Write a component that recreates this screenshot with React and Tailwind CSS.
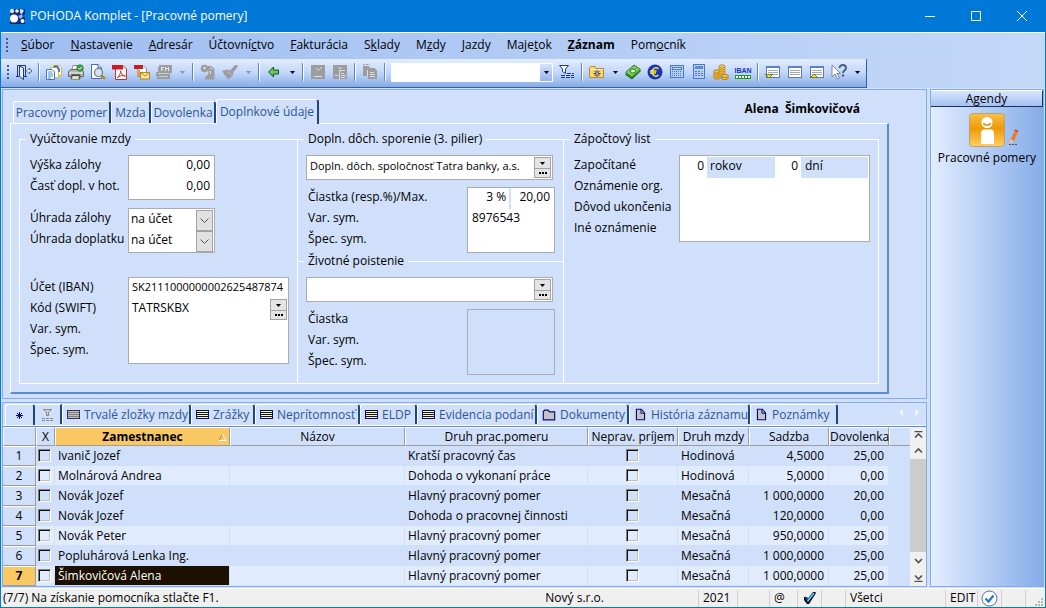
import { useState } from "react";
import clsx from "clsx";

const MENU = [
    ["", "S", "úbor"],
    ["", "N", "astavenie"],
    ["", "A", "dresár"],
    ["Účtovní", "c", "tvo"],
    ["", "F", "akturácia"],
    ["S", "k", "lady"],
    ["M", "z", "dy"],
    ["", "J", "azdy"],
    ["Maje", "t", "ok"],
    ["", "Z", "áznam"],
    ["Pom", "o", "cník"],
];

const FORM_TABS = [
    { name: "Pracovný pomer", width: "w-[98px]" },
    { name: "Mzda", width: "w-[40px]" },
    { name: "Dovolenka", width: "w-[65px]" },
    { name: "Doplnkové údaje", width: "w-[103px]" },
];

const GRID_TABS = [
    { name: "Trvalé zložky mzdy", icon: "gray", width: "w-[129px]" },
    { name: "Zrážky", icon: "yellow", width: "w-[64px]" },
    { name: "Neprítomnosť", icon: "yellow", width: "w-[105px]" },
    { name: "ELDP", icon: "yellow", width: "w-[57px]" },
    { name: "Evidencia podaní", icon: "yellow", width: "w-[120px]" },
    { name: "Dokumenty", icon: "folder", width: "w-[92px]" },
    { name: "História záznamu", icon: "page", width: "w-[121px]" },
    { name: "Poznámky", icon: "page", width: "w-[88px]" },
];

const EMPLOYEES = [
    ["Ivanič Jozef", "Kratší pracovný čas", "Hodinová", "4,5000", "25,00"],
    ["Molnárová Andrea", "Dohoda o vykonaní práce", "Hodinová", "5,0000", "0,00"],
    ["Novák Jozef", "Hlavný pracovný pomer", "Mesačná", "1 000,0000", "20,00"],
    ["Novák Jozef", "Dohoda o pracovnej činnosti", "Mesačná", "120,0000", "0,00"],
    ["Novák Peter", "Hlavný pracovný pomer", "Mesačná", "950,0000", "25,00"],
    ["Popluhárová Lenka Ing.", "Hlavný pracovný pomer", "Mesačná", "1 000,0000", "25,00"],
    ["Šimkovičová Alena", "Hlavný pracovný pomer", "Mesačná", "1 000,0000", "25,00"],
];

// ---------- icons ----------

const Icon = ({ children, size = 16, crisp = true }) => (
    <svg
        width={size}
        height={size}
        viewBox="0 0 16 16"
        fill="none"
        className="shrink-0"
        shapeRendering={crisp ? "crispEdges" : "auto"}
        aria-hidden="true"
    >
        {children}
    </svg>
);

const ExitIcon = () => (
    <Icon crisp={false}>
        <path d="M1.5 12V1.5H9.5V12M0 12.5H3M8 12.5H11" stroke="#1f3a80" />
        <path d="M3.5 2L7.5 4V15.5L3.5 12.5Z" fill="#e8f0ff" stroke="#1f3a80" />
        <path d="M10.5 7L13.5 4V6H15.5V8H13.5V10Z" fill="#fff" stroke="#3b5a97" strokeWidth="0.8" />
    </Icon>
);

const CopyIcon = () => (
    <Icon crisp={false}>
        <path d="M7.5 1.5H13L15.5 4V11.5H7.5Z" fill="#fff" stroke="#e0b030" />
        <path d="M4.5 3.5H10L12.5 6V13.5H4.5Z" fill="#fff" stroke="#d8b848" />
        <path d="M0.5 5.5H6L8.5 8V15.5H0.5Z" fill="#fff" stroke="#4a70c0" />
        <path d="M2 8H6M2 10H7M2 12H7M2 14H5" stroke="#3a8fd0" />
        <path d="M8 2.5H11L13 5V8" stroke="#1f5fc0" strokeWidth="1.5" />
    </Icon>
);

const PrintIcon = () => (
    <Icon crisp={false}>
        <path d="M5 1.5H12V7H3.5Z" fill="#fff" stroke="#888" />
        <path d="M0.5 7.5L2.5 5.5H14L15.5 7.5V12.5H0.5Z" fill="#b5b5b5" stroke="#666" />
        <path d="M1 9H15" stroke="#eee" />
        <path d="M3.5 10.5H12V15H3Z" fill="#444" stroke="#666" />
        <path d="M4.5 12H11L10.5 15H4Z" fill="#d8e6b8" />
        <circle cx="12" cy="4" r="3.3" fill="#3da13d" stroke="#1e7a1e" strokeWidth="0.6" />
        <path d="M10.4 4L11.6 5.3L13.8 2.8" stroke="#fff" />
    </Icon>
);

const PreviewIcon = () => (
    <Icon crisp={false}>
        <path d="M1.5 0.5H8L11.5 4V14.5H1.5Z" fill="#fff" stroke="#4a6cae" />
        <path d="M8 0.5V4H11.5" fill="#c8d8f4" stroke="#4a6cae" />
        <circle cx="8.5" cy="8.5" r="4" fill="#cfe4fa" stroke="#777" strokeWidth="1.2" />
        <path d="M11.5 11.5L15 15" stroke="#b8860b" strokeWidth="2.4" />
    </Icon>
);

const PdfIcon = () => (
    <Icon crisp={false}>
        <path d="M3.5 1.5H11L14.5 5V15.5H3.5Z" fill="#fff" stroke="#c03030" />
        <rect x="0" y="1" width="11" height="4.5" fill="#c81e1e" />
        <path d="M5 14C7 12 9 9 8.6 6.8C8.4 9 10.5 12 13.5 12C10 11 7 12 5 14Z" stroke="#d03030" />
    </Icon>
);

const PdfMailIcon = () => (
    <Icon crisp={false}>
        <path d="M3.5 1.5H9L12.5 5V12.5H3.5Z" fill="#fff" stroke="#8090b0" />
        <rect x="0" y="1" width="9" height="4" fill="#c81e1e" />
        <rect x="3" y="6" width="3" height="6" fill="#d8a050" />
        <rect x="6.5" y="8.5" width="9" height="6.5" fill="#fbe49a" stroke="#b58a1c" />
        <path d="M6.5 8.5L11 12L15.5 8.5" stroke="#b58a1c" />
    </Icon>
);

const FmIcon = () => (
    <Icon>
        <path d="M3 1H16V9H14V15H1V12H0V8H2V3H3Z" fill="#9d9d9d" />
        <path d="M5.5 7V3.5H8M6 5.5H7M9.5 7V3M10 4.5H12M12.5 7V3" stroke="#dce6f6" />
        <path d="M2 9.5H13M3 12.5H12" stroke="#c6cfdd" />
    </Icon>
);

const KeysIcon = () => (
    <Icon crisp={false}>
        <path d="M8 2H11L14.5 5V15.5H5V13.5L8.5 10Z" fill="#9d9d9d" />
        <circle cx="4.5" cy="4.5" r="3.8" fill="#9d9d9d" />
        <circle cx="4.5" cy="4" r="1.2" fill="#dce6f6" />
        <path d="M10 3.5L12.5 5.5M10.5 7V10" stroke="#dce6f6" />
    </Icon>
);

const BrushIcon = () => (
    <Icon crisp={false}>
        <path d="M0 7L5 5.5L8 6.5L13 1H15.5V3L11.5 8L11 11L6.5 15.5L3 11.5Z" fill="#9d9d9d" />
        <path d="M5 8L10 10.5" stroke="#c6cfdd" strokeWidth="0.6" />
    </Icon>
);

const BackIcon = () => (
    <Icon crisp={false}>
        <path d="M2.5 8L7.5 3V6H12.5V10H7.5V13Z" fill="#6cc36c" stroke="#0d5a0d" />
    </Icon>
);

const SaveIcon = () => (
    <Icon>
        <path d="M1 1H15V15H1Z" fill="#9d9d9d" />
        <path d="M6 4.5H7M7 5.5H8M8 6.5H9M9 5.5H10M10 4.5H11M11 3.5H12M4 12.5H12" stroke="#d5deec" />
    </Icon>
);

const SaveCopyIcon = () => (
    <Icon>
        <path d="M1 1H15V15H1Z" fill="#9d9d9d" />
        <path d="M6 3.5H7M7 4.5H9M9 3.5H10M3 11.5H6" stroke="#d5deec" />
        <path d="M7.5 15V6.5H13M9 9.5H12M9 11.5H14M9 13.5H13" stroke="#d5deec" />
    </Icon>
);

const PasteIcon = () => (
    <Icon>
        <path d="M1 2H6L8 4V12H1ZM6 4H12L15 7V15H6Z" fill="#9d9d9d" />
        <path d="M5.5 6V12M8 8.5H12M8 10.5H13M8 12.5H13" stroke="#d5deec" />
        <path d="M1 0.5H8" stroke="#9d9d9d" strokeDasharray="2 1" />
    </Icon>
);

const FilterIcon = () => (
    <Icon crisp={false}>
        <path d="M0.5 1.5H9.5L6.5 5V9.5L3.5 7.5V5Z" fill="#fff" stroke="#1f3a80" />
        <path d="M2 11.5H15M2 13.5H15M8 9.5H15" stroke="#1f3a80" strokeDasharray="4 1" />
    </Icon>
);

const GridFilterIcon = () => (
    <svg width="13" height="14" viewBox="0 0 13 14" fill="none" shapeRendering="crispEdges" aria-hidden="true">
        <path d="M2 1H11V2H10V3H9V4H8V8H5V4H4V3H3V2H2Z" fill="#8a8a8a" />
        <path d="M4 2H9V3H8V4H7V7H6V4H5V3H4Z" fill="#d0d0d0" />
        <path d="M1 10.5H12M1 12.5H12" stroke="#8a8a8a" strokeDasharray="3 1" />
    </svg>
);

const StarFolderIcon = () => (
    <Icon crisp={false}>
        <path d="M0.5 3.5V13.5H14.5V4.5H7L6 2.5H1.5Z" fill="#fbd768" stroke="#b8892a" />
        <path d="M1 5.5H14" stroke="#fff1b8" />
        <path d="M8 6V13M4.5 9.5H11.5M5.5 7L10.5 12M10.5 7L5.5 12" stroke="#26357a" />
        <circle cx="8" cy="9.5" r="1" fill="#fbd768" />
    </Icon>
);

const MoneyIcon = () => (
    <Icon crisp={false}>
        <path d="M0.5 10.5L9 3L15.5 7L7 15Z" fill="#2e8b2e" stroke="#1f6a1f" />
        <path d="M0.5 8.5L9 1L15.5 5.5L7 13Z" fill="#7cc95a" stroke="#2b7f2b" />
        <ellipse cx="8" cy="7" rx="2.6" ry="2" fill="#e8f6d0" stroke="#2b7f2b" />
    </Icon>
);

const EuroIcon = () => (
    <Icon crisp={false}>
        <circle cx="8" cy="8" r="7.5" fill="#1a35b0" />
        <path d="M11.5 4.8A4 4 0 1 0 11.5 11.2M3 7H9.5M3 9H9" stroke="#ffe24a" strokeWidth="1.5" />
    </Icon>
);

const WideCalcIcon = () => (
    <Icon>
        <rect x="1.5" y="1.5" width="13" height="12" fill="#b6d0f7" stroke="#4a78c0" />
        <rect x="3.5" y="3.5" width="9" height="2" fill="#dbe8fc" stroke="#4a78c0" />
        <path d="M3 7.5H13M3 9.5H13M3 11.5H13" stroke="#4a78c0" strokeDasharray="1 1" />
    </Icon>
);

const CalcIcon = () => (
    <Icon>
        <rect x="2.5" y="0.5" width="11" height="14" fill="#b8d2f6" stroke="#4a78c0" />
        <rect x="4" y="2" width="8" height="3" fill="#5b8bd0" />
        <path d="M4 7.5H12M4 9.5H12M4 11.5H12" stroke="#4a78c0" strokeDasharray="2 1" />
        <path d="M10 7.5H12" stroke="#e0a020" />
    </Icon>
);

const CoinsIcon = () => (
    <Icon crisp={false}>
        {[13.5, 11.5, 9.5, 7.5].map((y) => (
            <ellipse key={y} cx="4" cy={y} rx="3.4" ry="1.6" fill="#f5c435" stroke="#a86f10" strokeWidth="0.8" />
        ))}
        {[8.5, 6.5, 4.5, 2.5].map((y) => (
            <ellipse key={y} cx="9" cy={y} rx="3.2" ry="1.6" fill="#fbd04c" stroke="#a86f10" strokeWidth="0.8" />
        ))}
        {[14, 12].map((y) => (
            <ellipse key={y} cx="11.8" cy={y} rx="3.6" ry="1.6" fill="#f5c435" stroke="#a86f10" strokeWidth="0.8" />
        ))}
    </Icon>
);

const ListIcon = ({ mark }) => (
    <Icon>
        <rect x="1.5" y="2.5" width="13" height="11" fill="#fff" stroke="#5b7bb0" />
        <rect x="1" y="2" width="14" height="2" fill="#5b84c4" />
        <path d="M3 6.5H13M3 8.5H13M3 10.5H13" stroke="#a0a8b8" />
        {mark === "down" && <path d="M0.5 10.5H7.5L4 14Z" fill="#f3ee3a" stroke="#77771a" />}
        {mark === "up" && <path d="M1.5 13.5H8.5L5 10Z" fill="#f3ee3a" stroke="#77771a" />}
    </Icon>
);

const HelpIcon = () => (
    <Icon crisp={false}>
        <path d="M1 1V13L4 10L6.5 15L8.5 14L6 9.5H9.5Z" fill="#fff" stroke="#6f7f98" strokeWidth="0.9" />
        <path d="M8.5 4C8.5 0 15 0 15 4C15 6.5 12 6.5 12 9" stroke="#3f5f80" strokeWidth="1.8" />
        <circle cx="12" cy="11.5" r="1.2" fill="#3f5f80" />
    </Icon>
);

const CaretIcon = ({ color = "#000" }) => (
    <svg width="5" height="3" viewBox="0 0 5 3" aria-hidden="true">
        <path d="M0 0H5L2.5 3Z" fill={color} />
    </svg>
);

const TabIcon = ({ kind }) => {
    if (kind === "folder")
        return (
            <Icon size={14} crisp={false}>
                <path d="M1.5 13.5V4L3 2.5H7L8.5 4.5H14.5V13.5Z" fill="#c4c4c4" stroke="#0a0a70" strokeWidth="1.3" />
            </Icon>
        );
    if (kind === "page")
        return (
            <Icon size={13} crisp={false}>
                <path d="M3 1.5H9L13 6V14.5H3Z" fill="#c4c4c4" stroke="#0a0a70" strokeWidth="1.4" />
                <path d="M8.5 1.5V6.5H13" stroke="#0a0a70" strokeWidth="1.2" />
            </Icon>
        );
    // filled bars instead of strokes keep the light stripes visible at this size
    return (
        <svg width="13" height="10" viewBox="0 0 13 10" shapeRendering="crispEdges" className="shrink-0" aria-hidden="true">
            <rect width="13" height="9" fill={kind === "gray" ? "#303050" : "#0a0a70"} />
            {kind === "gray" && <rect x="1" y="1" width="11" height="7" fill="#808080" />}
            <path d="M1 1H12V2H1ZM1 3H12V4H1ZM1 5H12V6H1ZM1 7H12V8H1Z" fill={kind === "gray" ? "#c0c0c0" : "#ffff80"} />
        </svg>
    );
};

// ---------- toolbar ----------

const Tool = ({ label, children, disabled }) => (
    <button type="button" aria-label={label} disabled={disabled} className="flex h-full w-[22px] items-center justify-center">
        {children}
    </button>
);

const ToolCaret = ({ label, color }) => (
    <button type="button" aria-label={label} className="flex h-full w-[14px] items-center justify-center">
        <CaretIcon color={color} />
    </button>
);

const Sep = () => <div className="mx-[3px] h-[18px] w-0.5 border-l border-[#5f86c4] bg-white" />;

const Grip = () => (
    <div className="flex flex-col gap-0.5" aria-hidden="true">
        {[0, 1, 2, 3].map((i) => (
            <span key={i} className="size-0.5 bg-[#3b5a97]" />
        ))}
    </div>
);

const Toolbar = () => (
    <div className="flex h-[29px] items-center self-start border-r border-b border-[#3b5a97] bg-linear-to-b from-[#e3edff] via-[#c0d6f9] to-[#86ace8] pr-[2px] pb-0.5 pl-[6px]">
        <Grip />
        <div className="ml-1 flex h-full items-center">
            <Tool label="Koniec"><ExitIcon /></Tool>
            <Sep />
            <Tool label="Kopírovať"><CopyIcon /></Tool>
            <Tool label="Tlač"><PrintIcon /></Tool>
            <Tool label="Náhľad"><PreviewIcon /></Tool>
            <Tool label="PDF"><PdfIcon /></Tool>
            <Tool label="PDF e-mailom"><PdfMailIcon /></Tool>
            <Tool label="Fax" disabled><FmIcon /></Tool>
            <ToolCaret label="Možnosti faxu" color="#8a94a6" />
            <Sep />
            <Tool label="Kľúče" disabled><KeysIcon /></Tool>
            <Tool label="Formát" disabled><BrushIcon /></Tool>
            <ToolCaret label="Možnosti formátu" color="#8a94a6" />
            <Sep />
            <Tool label="Späť"><BackIcon /></Tool>
            <ToolCaret label="História" />
            <Sep />
            <Tool label="Uložiť" disabled><SaveIcon /></Tool>
            <Tool label="Uložiť kópiu" disabled><SaveCopyIcon /></Tool>
            <Sep />
            <Tool label="Prilepiť" disabled><PasteIcon /></Tool>
            <Sep />
            <div className="ml-0.5 flex h-[19px] w-[162px] border border-white bg-white">
                <input aria-label="Hľadať" className="min-w-0 flex-1 bg-white px-1 outline-none" />
                <button type="button" aria-label="Zoznam" className="flex w-3 items-center justify-center bg-linear-to-b from-[#d6e5fd] to-[#93b5ec]">
                    <CaretIcon />
                </button>
            </div>
            <div className="ml-[3px] flex h-full items-center">
                <Tool label="Filter"><FilterIcon /></Tool>
                <Sep />
                <Tool label="Obľúbené"><StarFolderIcon /></Tool>
                <ToolCaret label="Zoznam obľúbených" />
                <Tool label="Peniaze"><MoneyIcon /></Tool>
                <Tool label="Euro"><EuroIcon /></Tool>
                <Tool label="Kalkulačka"><WideCalcIcon /></Tool>
                <Tool label="Výpočet"><CalcIcon /></Tool>
                <Tool label="Mince"><CoinsIcon /></Tool>
                <button type="button" className="flex h-full w-[22px] flex-col items-center justify-center">
                    <span className="font-['Liberation_Sans',sans-serif] text-[7px] leading-[9px] font-bold text-[#1a35b0]">IBAN</span>
                    <svg width="16" height="4" viewBox="0 0 16 4" shapeRendering="crispEdges" aria-hidden="true">
                        <path d="M0 0H16V4H0Z" fill="#1c9c1c" />
                        <path d="M1 2H15" stroke="#fff" strokeWidth="2" strokeDasharray="2 1" />
                    </svg>
                </button>
                <Sep />
                <Tool label="Dole"><ListIcon mark="down" /></Tool>
                <Tool label="Zoznam agendy"><ListIcon /></Tool>
                <Tool label="Hore"><ListIcon mark="up" /></Tool>
                <Tool label="Pomoc"><HelpIcon /></Tool>
                <ToolCaret label="Možnosti pomoci" />
            </div>
        </div>
    </div>
);

// ---------- form ----------

const Labels = ({ items }) => (
    <div className="flex flex-col">
        {items.map(([id, text]) => (
            <label key={id} htmlFor={id} className="h-[21px] leading-[20px] whitespace-nowrap">
                {text}
            </label>
        ))}
    </div>
);

const Box = ({ className, disabled, children }) => (
    <div className={clsx("flex flex-col border border-[#a9adb3]", !disabled && "bg-white", className)}>{children}</div>
);

const Field = ({ id, value = "", className, ...rest }) => (
    <input id={id} defaultValue={value} className={clsx("h-[21px] w-full min-w-0 pb-1 outline-none", className)} {...rest} />
);

const PickButtons = ({ label }) => (
    <div className="flex w-[17px] shrink-0 flex-col">
        <button type="button" aria-label={label} className="flex h-[12px] items-center justify-center border border-[#a3a3a3] bg-[#e4e4e4]">
            <CaretIcon />
        </button>
        <button type="button" aria-label={label + " – viac"} className="flex h-[9px] items-center justify-center gap-px border border-t-0 border-[#a3a3a3] bg-[#e4e4e4]">
            <span className="size-0.5 bg-black" />
            <span className="size-0.5 bg-black" />
            <span className="size-0.5 bg-black" />
        </button>
    </div>
);

const PayoutSelect = ({ id }) => (
    <div className="relative flex">
        <select id={id} defaultValue="na účet" className="h-[21px] w-full appearance-none pb-1 pl-px outline-none">
            <option>na účet</option>
            <option>v hotovosti</option>
        </select>
        <span className="pointer-events-none absolute inset-y-0 right-0 flex w-[17px] items-center justify-center border border-[#a3a3a3] bg-[#e1e1e1]">
            <svg width="9" height="5" viewBox="0 0 9 5" fill="none" aria-hidden="true">
                <path d="M0.5 0.5L4.5 4.5L8.5 0.5" stroke="#505050" />
            </svg>
        </span>
    </div>
);

const Legend = ({ children, className }) => <legend className={clsx("h-4 px-1 leading-4", className)}>{children}</legend>;

const PayoutFieldset = () => (
    <fieldset className="border border-white pt-2 pl-[10px]">
        <Legend className="-ml-1">Vyúčtovanie mzdy</Legend>
        <div className="grid grid-cols-[98px_1fr] items-start gap-y-2">
            <Labels items={[["zaloha", "Výška zálohy"], ["hotovost", "Časť dopl. v hot."]]} />
            <Box className="h-[45px] w-[87px]">
                <Field id="zaloha" value="0,00" className="pr-1 text-right" />
                <Field id="hotovost" value="0,00" className="pr-1 text-right" />
            </Box>
            <Labels items={[["uhradaZalohy", "Úhrada zálohy"], ["uhradaDoplatku", "Úhrada doplatku"]]} />
            <Box className="h-[45px] w-[87px] p-px">
                <PayoutSelect id="uhradaZalohy" />
                <PayoutSelect id="uhradaDoplatku" />
            </Box>
        </div>
        <div className="mt-6 grid grid-cols-[98px_1fr] items-start">
            <Labels
                items={[["iban", "Účet (IBAN)"], ["swift", "Kód (SWIFT)"], ["varSym", "Var. sym."], ["specSym", "Špec. sym."]]}
            />
            <Box className="h-[87px] w-[161px]">
                <Field id="iban" value="SK2111000000002625487874" className="pl-[3px] text-[11px]" />
                <div className="flex items-center pr-px">
                    <Field id="swift" value="TATRSKBX" className="pl-[3px]" />
                    <PickButtons label="Vybrať banku" />
                </div>
                <Field id="varSym" className="pl-[3px]" />
                <Field id="specSym" className="pl-[3px]" />
            </Box>
        </div>
    </fieldset>
);

const SavingsFieldset = () => (
    <fieldset className="border-t border-white pt-2 pr-2 pl-2">
        <Legend className="-ml-0.5">Dopln. dôch. sporenie (3. pilier)</Legend>
        <Box className="mr-[2px] h-[25px]">
            <div className="flex items-center py-px pr-px">
                <Field aria-label="Spoločnosť" value="Dopln. dôch. spoločnosť Tatra banky, a.s." className="pl-[3px] text-[11px]" />
                <PickButtons label="Vybrať spoločnosť" />
            </div>
        </Box>
        <div className="mt-[7px] flex items-start justify-between pl-[2px]">
            <Labels items={[["sporenie", "Čiastka (resp.%)/Max."], ["sporVar", "Var. sym."], ["sporSpec", "Špec. sym."]]} />
            <Box className="h-[66px] w-[88px]">
                <div className="flex">
                    <Field id="sporenie" value="3 %" className="border-r-2 border-[#d0e0fa] pr-[3px] text-right" />
                    <Field aria-label="Max." value="20,00" className="pr-1 text-right" />
                </div>
                <Field id="sporVar" value="8976543" className="pl-1" />
                <Field id="sporSpec" className="pl-1" />
            </Box>
        </div>
    </fieldset>
);

const InsuranceFieldset = () => (
    <fieldset className="grow border-y border-white pt-2 pr-2 pb-2 pl-2">
        <Legend className="-ml-0.5">Životné poistenie</Legend>
        <Box className="mr-[2px] h-[25px]">
            <div className="flex items-center py-px pr-px">
                <Field aria-label="Poisťovňa" className="pl-[3px]" />
                <PickButtons label="Vybrať poisťovňu" />
            </div>
        </Box>
        <div className="mt-[7px] flex items-start justify-between pl-[2px]">
            <Labels items={[["poistenie", "Čiastka"], ["poistVar", "Var. sym."], ["poistSpec", "Špec. sym."]]} />
            <Box disabled className="h-[66px] w-[88px]">
                <Field id="poistenie" disabled />
                <Field id="poistVar" disabled />
                <Field id="poistSpec" disabled />
            </Box>
        </div>
    </fieldset>
);

const CreditFieldset = () => (
    <fieldset className="border border-white pt-2 pl-[10px]">
        <Legend className="-ml-1">Zápočtový list</Legend>
        <div className="grid grid-cols-[105px_191px] items-start">
            <Labels
                items={[["roky", "Započítané"], ["oznamenie", "Oznámenie org."], ["dovod", "Dôvod ukončenia"], ["ine", "Iné oznámenie"]]}
            />
            <Box className="h-[87px] p-px">
                <div className="flex bg-[#d0e0fa]">
                    <span className="flex w-[26px] shrink-0 bg-white"><Field id="roky" value="0" className="pr-[3px] text-right" /></span>
                    <label htmlFor="roky" className="w-[68px] shrink-0 pl-[3px] leading-[17px]">rokov</label>
                    <span className="flex w-[26px] shrink-0 bg-white"><Field id="dni" value="0" className="pr-[3px] text-right" /></span>
                    <label htmlFor="dni" className="pl-1 leading-[17px]">dní</label>
                </div>
                <Field id="oznamenie" className="px-1" />
                <Field id="dovod" className="px-1" />
                <Field id="ine" className="px-1" />
            </Box>
        </div>
    </fieldset>
);

const FormPanel = () => {
    const [active, setActive] = useState("Doplnkové údaje");

    return (
        <section className="border border-[#86ace8] pt-[9px] pr-[37px] pb-1 pl-[7px]">
            <div className="flex items-end pl-[3px]">
                {FORM_TABS.map((tab) => (
                    <button
                        key={tab.name}
                        type="button"
                        onClick={() => setActive(tab.name)}
                        className={clsx(
                            "flex items-center justify-center rounded-t-[3px] border border-r-2 border-b-0 border-white border-r-[#1f4788] whitespace-nowrap text-[#2f5597]",
                            tab.width,
                            tab.name === active ? "relative -mb-px h-[25px] bg-[#d0e0fa] pb-px" : "h-[22px]",
                        )}
                    >
                        {tab.name}
                    </button>
                ))}
                <h1 className="mr-[29px] mb-1.5 ml-auto font-bold whitespace-pre">Alena  Šimkovičová</h1>
            </div>
            <div className="grid grid-cols-[279px_265px_1fr] border-t border-r-2 border-b-2 border-l border-white border-r-[#5b8bd5] border-b-[#5b8bd5] px-2 pt-[7px] pb-2">
                <PayoutFieldset />
                <div className="flex flex-col">
                    <SavingsFieldset />
                    <InsuranceFieldset />
                </div>
                <CreditFieldset />
            </div>
        </section>
    );
};

// ---------- employee grid ----------

const Check = ({ label }) => (
    <input
        type="checkbox"
        aria-label={label}
        className="block size-[13px] appearance-none border border-t-[#808080] border-r-white border-b-white border-l-[#808080] shadow-[inset_1px_1px_0_#101010,inset_-1px_-1px_0_#c0c0c0]"
    />
);

const Th = ({ children, className }) => (
    <th className={clsx("h-[19px] border-t border-r border-b border-l border-t-white border-r-[#9c9c9c] border-b-[#9c9c9c] border-l-white p-0 font-normal whitespace-nowrap", className)}>
        {children}
    </th>
);

const GridTabs = () => (
    <div className="flex h-[23px] shrink-0 items-stretch border-b border-white pt-px pl-0.5 text-[#2f5597]">
        <button type="button" aria-label="Tabuľka" className="flex w-[30px] items-center justify-center rounded-t-[3px] border-t border-r-2 border-l border-white border-r-[#1f4788]">
            <svg width="7" height="7" viewBox="0 0 7 7" fill="none" aria-hidden="true">
                <path d="M3.5 0V7M0 3.5H7M1 1L6 6M6 1L1 6" stroke="#0a0a80" />
            </svg>
        </button>
        <button type="button" aria-label="Filter tabuľky" className="mb-px flex w-[27px] items-center justify-center border-t border-r-2 border-white border-r-[#1f4788]">
            <GridFilterIcon />
        </button>
        {GRID_TABS.map((tab) => (
            <button
                key={tab.name}
                type="button"
                className={clsx(
                    "mb-px flex items-center gap-1 rounded-t-[3px] border-t border-r-2 border-l border-white border-r-[#1f4788] pl-1 whitespace-nowrap",
                    tab.width,
                )}
            >
                <TabIcon kind={tab.icon} />
                {tab.name}
            </button>
        ))}
        <div className="mr-[7px] mb-1 ml-auto flex items-center gap-3">
            <svg width="4" height="7" viewBox="0 0 4 7" aria-hidden="true"><path d="M4 0V7L0 3.5Z" fill="#f2f6fc" /></svg>
            <svg width="4" height="7" viewBox="0 0 4 7" aria-hidden="true"><path d="M0 0V7L4 3.5Z" fill="#f2f6fc" /></svg>
        </div>
    </div>
);

const ScrollBar = () => (
    <div className="flex w-4 shrink-0 flex-col items-center bg-[#f0f0f0] text-[#505050]">
        {["M0.5 0.5H8.5M1 6.5L4.5 3L8 6.5", "M1 5.5L4.5 2L8 5.5"].map((d) => (
            <button key={d} type="button" aria-label="Hore" className="flex h-[16px] items-center">
                <svg width="9" height="8" viewBox="0 0 9 8" fill="none"><path d={d} stroke="currentColor" strokeWidth="1.6" /></svg>
            </button>
        ))}
        <div className="w-full flex-1 bg-[#cdcdcd]" />
        {["M1 2L4.5 5.5L8 2", "M0.5 7.5H8.5M1 1.5L4.5 5L8 1.5"].map((d) => (
            <button key={d} type="button" aria-label="Dole" className="flex h-[17px] items-center">
                <svg width="9" height="8" viewBox="0 0 9 8" fill="none"><path d={d} stroke="currentColor" strokeWidth="1.6" /></svg>
            </button>
        ))}
    </div>
);

const EmployeeGrid = () => (
    <section className="mt-[3px] flex flex-1 flex-col border border-[#86ace8]">
        <GridTabs />
        <div className="flex flex-1 border-t border-[#5b8bd5]">
            <div className="min-w-0 flex-1">
                <table className="w-full table-fixed border-separate border-spacing-0">
                    <colgroup>
                        <col className="w-[33px]" />
                        <col className="w-[19px]" />
                        <col className="w-[175px]" />
                        <col className="w-[175px]" />
                        <col className="w-[183px]" />
                        <col className="w-[90px]" />
                        <col className="w-[71px]" />
                        <col className="w-[80px]" />
                        <col className="w-[60px]" />
                        <col />
                    </colgroup>
                    <thead>
                        <tr>
                            <Th />
                            <Th>X</Th>
                            <Th className="bg-[#fac863] text-center">
                                <span className="grid grid-cols-[1fr_auto_1fr] items-center font-bold">
                                    <span />
                                    Zamestnanec
                                    <svg width="9" height="8" viewBox="0 0 9 8" fill="none" className="mr-[2px] justify-self-end" aria-hidden="true">
                                        <path d="M4.5 1L1 7.5" stroke="#a09070" />
                                        <path d="M4.5 1L8 7.5H1" stroke="#fff" />
                                    </svg>
                                </span>
                            </Th>
                            <Th>Názov</Th>
                            <Th>Druh prac.pomeru</Th>
                            <Th>Neprav. príjem</Th>
                            <Th>Druh mzdy</Th>
                            <Th>Sadzba</Th>
                            <Th>Dovolenka</Th>
                            <Th className="border-r-0" />
                        </tr>
                    </thead>
                    <tbody>
                        {EMPLOYEES.map(([name, contract, wage, rate, leave], i) => {
                            const selected = i === EMPLOYEES.length - 1;
                            const base = "h-[20px] border-r border-b border-[#d0e0fa] p-0 whitespace-nowrap";
                            const cell = clsx(base, [1, 4, 6].includes(i) && "bg-[#e0ebfe]");
                            return (
                                <tr key={i}>
                                    <th
                                        scope="row"
                                        className={clsx(
                                            "h-[20px] border-t border-r border-b border-t-white border-r-[#9c9c9c] border-b-[#9c9c9c] p-0",
                                            selected ? "bg-[#fac863] font-bold" : "font-normal",
                                        )}
                                    >
                                        {i + 1}
                                    </th>
                                    <td className={clsx(cell, "pl-[2px]")}><Check label={"Vybrať " + name} /></td>
                                    <td className={clsx(selected ? base + " bg-[#1c1000] text-white" : cell, "pl-[3px]")}>{name}</td>
                                    <td className={cell} />
                                    <td className={clsx(cell, "pl-[3px]")}>{contract}</td>
                                    <td className={cell}><div className="flex justify-center"><Check label="Nepravidelný príjem" /></div></td>
                                    <td className={clsx(cell, "pl-[3px]")}>{wage}</td>
                                    <td className={clsx(cell, "pr-1 text-right")}>{rate}</td>
                                    <td className={clsx(cell, "pr-1 text-right")}>{leave}</td>
                                    <td className="p-0" />
                                </tr>
                            );
                        })}
                    </tbody>
                </table>
            </div>
            <ScrollBar />
        </div>
    </section>
);

const Sidebar = () => (
    <aside className="ml-[3px] flex w-[114px] shrink-0 flex-col items-center border border-[#86ace8] bg-linear-to-r from-[#e3edff] to-[#86ace8]">
        <h2 className="h-[17px] w-full border-t border-r border-b border-t-white border-r-[#1f3060] border-b-[#1f3060] bg-linear-to-b from-[#d8e6fd] to-[#a3c1f1] text-center leading-[16px]">
            Agendy
        </h2>
        <a href="#pomery" className="mt-1.5 flex flex-col items-center whitespace-nowrap">
            <svg width="50" height="36" viewBox="0 0 50 36" fill="none" className="ml-[14px]" aria-hidden="true">
                <defs>
                    <linearGradient id="tile" x1="0" y1="0" x2="0" y2="1">
                        <stop offset="0" stopColor="#f8c04a" />
                        <stop offset="0.45" stopColor="#ee9a08" />
                        <stop offset="1" stopColor="#fdd060" />
                    </linearGradient>
                </defs>
                <rect x="0.5" y="0.5" width="35" height="33" rx="3" fill="url(#tile)" stroke="#b5a27c" />
                <circle cx="18" cy="9.5" r="5.5" fill="#fff" />
                <path d="M14.5 10C15.5 13 20.5 13 21.5 10" stroke="#e08c08" strokeWidth="1.5" />
                <path d="M12 18.5L14 16.5H23L25 18.5V31H12Z" fill="#fff" />
                <path d="M41 31L42 26L46 17L49 18.5L45 28Z" fill="#f07a28" />
                <path d="M41 31L42 26.5L44.5 28Z" fill="#f6dcb0" />
                <path d="M46 17L49 18.5" stroke="#c84020" strokeWidth="1.5" />
                <path d="M40 31.5H49" stroke="#405070" strokeDasharray="2 1" />
            </svg>
            <span className="mt-px">Pracovné pomery</span>
        </a>
    </aside>
);

const StatusCell = ({ className, children }) => (
    <div className={clsx("flex h-[17px] shrink-0 items-center border-l border-[#d0d0d0]", className)}>{children}</div>
);

const StatusBar = () => (
    <footer className="mt-px flex h-[19px] items-center border-t border-white bg-[#f0f0f0]">
        <span className="pl-[2px]">(7/7) Na získanie pomocníka stlačte F1.</span>
        <span className="mr-[94px] ml-auto">Nový s.r.o.</span>
        <StatusCell className="w-[39px] pl-1">2021</StatusCell>
        <StatusCell className="w-[32px]" />
        <StatusCell className="w-[28px] pl-1">@</StatusCell>
        <StatusCell className="w-[24px] justify-center">
            <svg width="14" height="14" viewBox="0 0 14 14" aria-hidden="true">
                <path d="M1 6H4L5 8L10 1H12L13 2L6 13H4L1 9Z" fill="#000" />
                <path d="M2 6L4.5 9.5L10 2" fill="none" stroke="#1a35e0" strokeWidth="1.4" />
                <path d="M4.5 10.5L11 2" stroke="#4fd8e8" strokeWidth="1.6" />
            </svg>
        </StatusCell>
        <StatusCell className="w-[24px]" />
        <StatusCell className="w-[100px] pl-1">Všetci</StatusCell>
        <StatusCell className="w-[32px] pl-1">EDIT</StatusCell>
        <StatusCell className="w-[24px] justify-center">
            <svg width="17" height="17" viewBox="0 0 17 17" fill="none" aria-hidden="true">
                <circle cx="8.5" cy="8.5" r="7.5" fill="#fff" stroke="#56708c" />
                <path d="M4.5 8.5L7.5 11.5L12.5 5.5" stroke="#1f78c8" strokeWidth="2.2" />
            </svg>
        </StatusCell>
        <StatusCell className="w-[24px]" />
        <StatusCell className="w-[20px] items-end justify-end pr-px">
            <svg width="9" height="9" viewBox="0 0 9 9" fill="#b8b8b8" aria-hidden="true">
                <path d="M6 0H8V2H6ZM3 3H5V5H3ZM6 3H8V5H6ZM0 6H2V8H0ZM3 6H5V8H3ZM6 6H8V8H6Z" />
            </svg>
        </StatusCell>
    </footer>
);

const TitleBar = () => (
    <header className="flex h-8 items-center bg-[#0078d7] pl-[8px] text-white">
        <svg width="17" height="16" viewBox="0 0 17 16" aria-hidden="true">
            <path d="M1 1H16V6L14 8L16 10V16H1Z" fill="#0d2b7a" />
            <circle cx="3" cy="3" r="2.2" fill="#cfe2ff" />
            <circle cx="8" cy="3" r="1.8" fill="#fff" />
            <path d="M11 1L15 2L13 6L11 5Z" fill="#dbe9ff" />
            <circle cx="5" cy="10.5" r="4" fill="#fff" />
            <path d="M9 8L13 6L14 9L11 11Z" fill="#8fb6f0" />
            <circle cx="13.5" cy="13" r="2" fill="#fff" />
        </svg>
        <span className="ml-1">POHODA Komplet - [Pracovné pomery]</span>
        <div className="ml-auto flex h-full">
            <button type="button" aria-label="Minimalizovať" className="flex w-[46px] items-center justify-center">
                <svg width="10" height="10" fill="none" aria-hidden="true"><path d="M0 5.5H10" stroke="#fff" /></svg>
            </button>
            <button type="button" aria-label="Maximalizovať" className="flex w-[46px] items-center justify-center">
                <svg width="10" height="10" fill="none" aria-hidden="true"><path d="M0.5 0.5H9.5V9.5H0.5Z" stroke="#fff" /></svg>
            </button>
            <button type="button" aria-label="Zavrieť" className="flex w-[46px] items-center justify-center">
                <svg width="10" height="10" fill="none" aria-hidden="true"><path d="M0 0L10 10M10 0L0 10" stroke="#fff" /></svg>
            </button>
        </div>
    </header>
);

const App = () => (
    <div className="flex min-h-screen flex-col border-x border-b border-[#0078d7] bg-[#d0e0fa] font-['Open_Sans','Noto_Sans',sans-serif] text-[12px] leading-4 text-black">
        <TitleBar />
        <div className="flex flex-col border-t border-white bg-linear-to-r from-[#9ebdf0] to-[#c4d9f8]">
            <nav className="flex h-[26px] items-center pb-0.5 pl-[5px]">
                <Grip />
                <div className="ml-[5px] flex">
                    {MENU.map(([before, key, after]) => (
                        <button key={key + after} type="button" className={clsx("px-2", key === "Z" && "font-bold")}>
                            {before}
                            <u>{key}</u>
                            {after}
                        </button>
                    ))}
                </div>
            </nav>
            <Toolbar />
        </div>
        <main className="mt-px flex flex-1 px-px">
            <div className="flex min-w-0 flex-1 flex-col">
                <FormPanel />
                <EmployeeGrid />
            </div>
            <Sidebar />
        </main>
        <StatusBar />
    </div>
);

export default App;
